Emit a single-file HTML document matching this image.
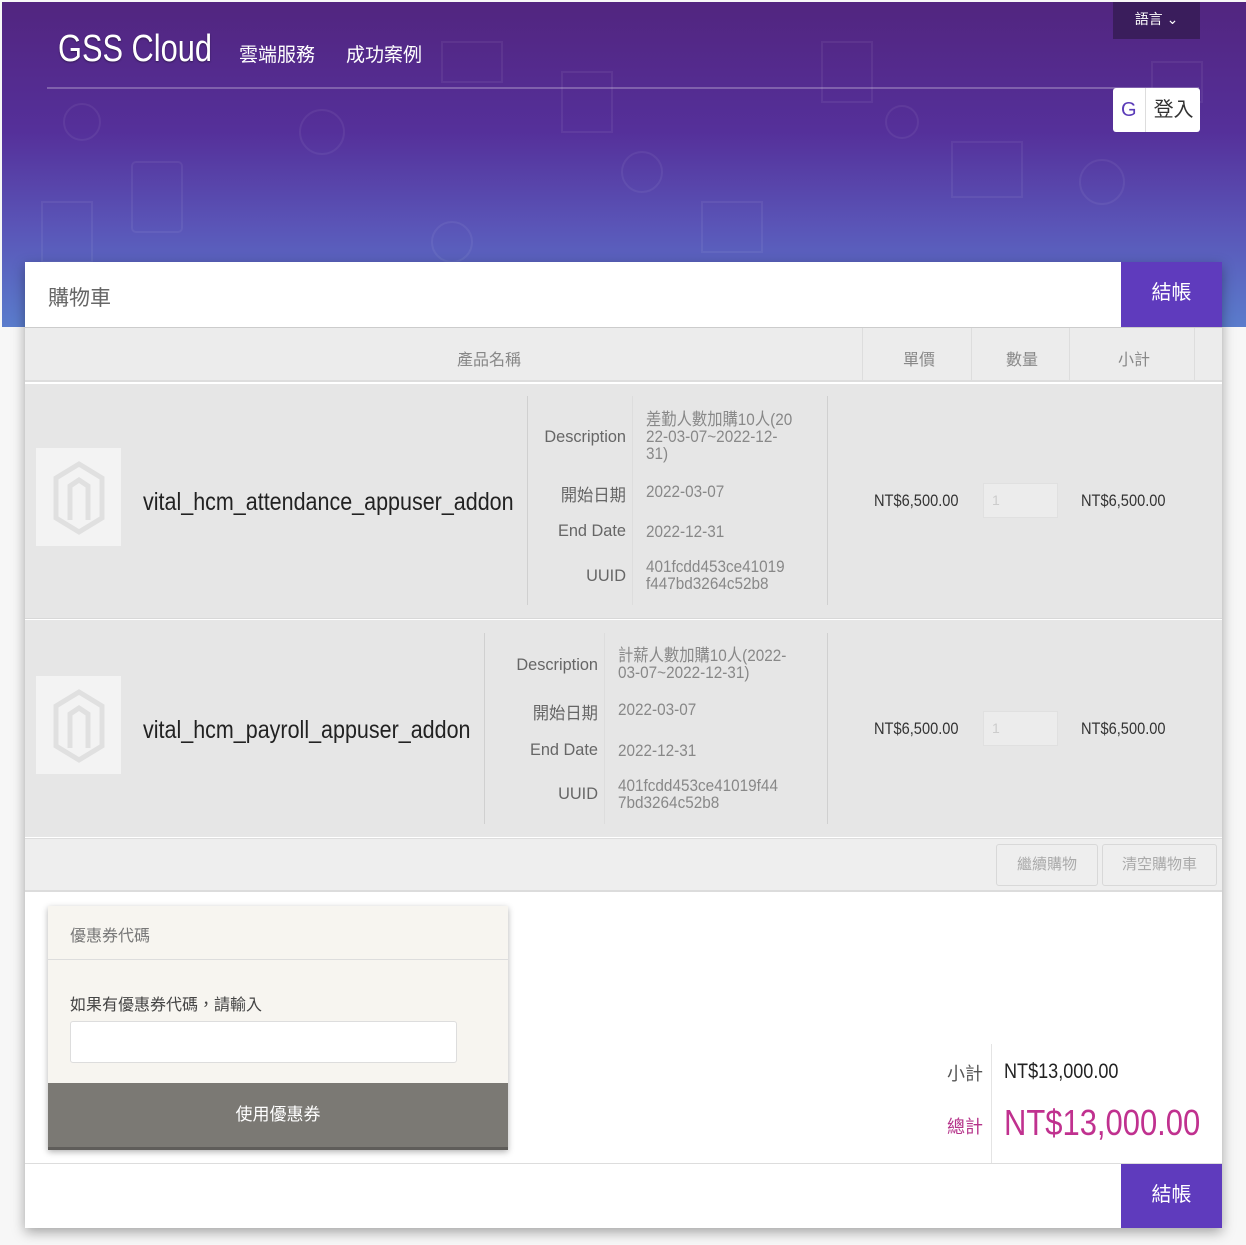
<!DOCTYPE html>
<html><head><meta charset="utf-8"><style>
*{margin:0;padding:0;box-sizing:border-box}
body{width:1246px;height:1245px;background:#f7f7f7;font-family:"Liberation Sans","Noto Sans CJK TC",sans-serif;position:relative;overflow:hidden;color:#555}
.a{position:absolute}
.hdr{left:2px;top:2px;width:1244px;height:325px;background:linear-gradient(180deg,#52257f 0%,#55309a 40%,#5a56b8 70%,#5a7ccc 100%)}
.c{transform:scaleX(.86);transform-origin:left center;white-space:nowrap}
.v{transform:scaleX(.9);transform-origin:left center;white-space:nowrap}
.cr{transform:scaleX(.96);transform-origin:right center;white-space:nowrap}
.lbl{color:#666;font-size:17px;text-align:right}
.val{color:#888;font-size:17px;line-height:17px}
.vl{width:1px;background:#d0d0d0}
</style></head><body>
<div class="a hdr"></div>
<svg class="a" style="left:2px;top:2px" width="1244" height="325" fill="none" stroke="rgba(255,255,255,0.06)" stroke-width="2">
<circle cx="80" cy="120" r="18"/><rect x="130" y="160" width="50" height="70" rx="4"/><circle cx="320" cy="130" r="22"/><rect x="440" y="40" width="60" height="40"/><circle cx="640" cy="170" r="20"/><rect x="700" y="200" width="60" height="50"/><circle cx="900" cy="120" r="16"/><rect x="950" y="140" width="70" height="55"/><circle cx="1100" cy="180" r="22"/><rect x="560" y="70" width="50" height="60"/><rect x="1150" y="60" width="50" height="40"/><rect x="40" y="200" width="50" height="60"/><circle cx="450" cy="240" r="20"/><rect x="820" y="40" width="50" height="60"/>
</svg>
<div class="a" style="left:58px;top:28px;color:#fff;font-size:38px;text-shadow:0 1px 2px rgba(0,0,0,.4);transform:scaleX(.81);transform-origin:left center;white-space:nowrap">GSS Cloud</div>
<div class="a" style="left:239px;top:40px;color:#fff;font-size:19px">雲端服務</div>
<div class="a" style="left:346px;top:40px;color:#fff;font-size:19px">成功案例</div>
<div class="a" style="left:47px;top:87px;width:1152px;height:2px;background:rgba(255,255,255,0.25)"></div>
<div class="a" style="left:1113px;top:2px;width:87px;height:37px;background:#3a1d5c;color:#fff;font-size:14px;text-align:center;line-height:34px">語言 ⌄</div>
<div class="a" style="left:1113px;top:88px;width:87px;height:44px;background:#fff;border-radius:3px;font-size:20px;line-height:44px"><span style="color:#5a3bb8;margin-left:8px">G</span><span style="display:inline-block;width:1px;height:44px;background:#ddd;vertical-align:top;margin:0 8px"></span><span style="color:#333">登入</span></div>

<div class="a" style="left:25px;top:262px;width:1197px;height:966px;background:#fff;box-shadow:0 4px 12px rgba(0,0,0,.35)"></div>
<div class="a" style="left:48px;top:282px;font-size:21px;color:#666">購物車</div>
<div class="a" style="left:1121px;top:262px;width:101px;height:65px;background:#5f3bbd;color:#fff;font-size:20px;text-align:center;line-height:62px">結帳</div>
<div class="a" style="left:25px;top:327px;width:1197px;height:1px;background:#ccc"></div>
<div class="a" style="left:25px;top:328px;width:1197px;height:54px;background:#ececec;border-bottom:2px solid #ddd"></div>
<div class="a vl" style="left:862px;top:328px;height:54px;background:#ddd"></div>
<div class="a vl" style="left:971px;top:328px;height:54px;background:#ddd"></div>
<div class="a vl" style="left:1069px;top:328px;height:54px;background:#ddd"></div>
<div class="a vl" style="left:1194px;top:328px;height:54px;background:#ddd"></div>
<div class="a" style="left:457px;top:346px;font-size:16px;color:#888">產品名稱</div>
<div class="a" style="left:903px;top:346px;font-size:16px;color:#888">單價</div>
<div class="a" style="left:1006px;top:346px;font-size:16px;color:#888">數量</div>
<div class="a" style="left:1118px;top:346px;font-size:16px;color:#888">小計</div>

<!-- row1 -->
<div class="a" style="left:25px;top:384px;width:1197px;height:235px;background:#e6e6e6;border-bottom:1px solid #d8d8d8"></div>
<div class="a" style="left:36px;top:448px;width:85px;height:98px;background:#f3f3f3"></div>
<svg class="a" style="left:52px;top:460px" width="54" height="76" fill="none" stroke="#e0e0e0" stroke-width="5"><path d="M27 4 L50 18 V58 L27 72 L4 58 V18 Z"/><path d="M18 60 V26 L27 20 L36 26 V60"/></svg>
<div class="a c" style="left:143px;top:488px;font-size:25px;color:#222">vital_hcm_attendance_appuser_addon</div>
<div class="a vl" style="left:527px;top:396px;height:209px"></div>
<div class="a vl" style="left:632px;top:396px;height:209px;background:#ddd"></div>
<div class="a vl" style="left:827px;top:396px;height:209px"></div>
<div class="a lbl cr" style="left:526px;top:427px;width:100px">Description</div>
<div class="a val v" style="left:646px;top:411px">差勤人數加購10人(20<br>22-03-07~2022-12-<br>31)</div>
<div class="a lbl cr" style="left:526px;top:481px;width:100px">開始日期</div>
<div class="a val v" style="left:646px;top:483px">2022-03-07</div>
<div class="a lbl cr" style="left:526px;top:521px;width:100px">End Date</div>
<div class="a val v" style="left:646px;top:523px">2022-12-31</div>
<div class="a lbl cr" style="left:526px;top:566px;width:100px">UUID</div>
<div class="a val v" style="left:646px;top:558px">401fcdd453ce41019<br>f447bd3264c52b8</div>
<div class="a c" style="left:874px;top:491px;font-size:17px;color:#333">NT$6,500.00</div>
<div class="a" style="left:983px;top:483px;width:75px;height:35px;background:#ececec;border:1px solid #e0e0e0;color:#ccc;font-size:14px;padding:8px">1</div>
<div class="a c" style="left:1081px;top:491px;font-size:17px;color:#333">NT$6,500.00</div>

<!-- row2 -->
<div class="a" style="left:25px;top:620px;width:1197px;height:217px;background:#e6e6e6"></div>
<div class="a" style="left:36px;top:676px;width:85px;height:98px;background:#f3f3f3"></div>
<svg class="a" style="left:52px;top:688px" width="54" height="76" fill="none" stroke="#e0e0e0" stroke-width="5"><path d="M27 4 L50 18 V58 L27 72 L4 58 V18 Z"/><path d="M18 60 V26 L27 20 L36 26 V60"/></svg>
<div class="a c" style="left:143px;top:716px;font-size:25px;color:#222">vital_hcm_payroll_appuser_addon</div>
<div class="a vl" style="left:484px;top:633px;height:191px"></div>
<div class="a vl" style="left:604px;top:633px;height:191px;background:#ddd"></div>
<div class="a vl" style="left:827px;top:633px;height:191px"></div>
<div class="a lbl cr" style="left:488px;top:655px;width:110px">Description</div>
<div class="a val v" style="left:618px;top:647px">計薪人數加購10人(2022-<br>03-07~2022-12-31)</div>
<div class="a lbl cr" style="left:488px;top:699px;width:110px">開始日期</div>
<div class="a val v" style="left:618px;top:701px">2022-03-07</div>
<div class="a lbl cr" style="left:488px;top:740px;width:110px">End Date</div>
<div class="a val v" style="left:618px;top:742px">2022-12-31</div>
<div class="a lbl cr" style="left:488px;top:784px;width:110px">UUID</div>
<div class="a val v" style="left:618px;top:777px">401fcdd453ce41019f44<br>7bd3264c52b8</div>
<div class="a c" style="left:874px;top:719px;font-size:17px;color:#333">NT$6,500.00</div>
<div class="a" style="left:983px;top:711px;width:75px;height:35px;background:#ececec;border:1px solid #e0e0e0;color:#ccc;font-size:14px;padding:8px">1</div>
<div class="a c" style="left:1081px;top:719px;font-size:17px;color:#333">NT$6,500.00</div>

<!-- actions -->
<div class="a" style="left:25px;top:838px;width:1197px;height:54px;background:#eeeeee;border-top:1px solid #ddd;border-bottom:2px solid #dcdcdc"></div>
<div class="a" style="left:996px;top:844px;width:102px;height:42px;border:1px solid #d8d8d8;border-radius:3px;background:#eee;color:#aaa;font-size:15px;text-align:center;line-height:40px">繼續購物</div>
<div class="a" style="left:1102px;top:844px;width:115px;height:42px;border:1px solid #d8d8d8;border-radius:3px;background:#eee;color:#aaa;font-size:15px;text-align:center;line-height:40px">清空購物車</div>

<!-- coupon -->
<div class="a" style="left:48px;top:906px;width:460px;height:244px;background:#f7f5f0;box-shadow:0 2px 6px rgba(0,0,0,.3)"></div>
<div class="a" style="left:70px;top:922px;font-size:16px;color:#777">優惠券代碼</div>
<div class="a" style="left:48px;top:959px;width:460px;height:1px;background:#ddd"></div>
<div class="a" style="left:70px;top:991px;font-size:16px;color:#444">如果有優惠券代碼，請輸入</div>
<div class="a" style="left:70px;top:1021px;width:387px;height:42px;background:#fff;border:1px solid #ddd;border-radius:3px"></div>
<div class="a" style="left:48px;top:1083px;width:460px;height:67px;background:#7b7974;border-bottom:3px solid #5f5d5a;color:#fff;font-size:17px;text-align:center;line-height:64px">使用優惠券</div>

<div class="a vl" style="left:991px;top:1044px;height:119px;background:#e4e4e4"></div>
<div class="a" style="left:947px;top:1060px;font-size:18px;color:#555">小計</div>
<div class="a c" style="left:1004px;top:1060px;font-size:21px;color:#222">NT$13,000.00</div>
<div class="a" style="left:947px;top:1113px;font-size:18px;color:#b5338a">總計</div>
<div class="a c" style="left:1004px;top:1102px;font-size:36px;color:#c0318f">NT$13,000.00</div>
<div class="a" style="left:25px;top:1163px;width:1197px;height:1px;background:#ddd"></div>
<div class="a" style="left:1121px;top:1164px;width:101px;height:64px;background:#5f3bbd;color:#fff;font-size:20px;text-align:center;line-height:62px">結帳</div>
</body></html>
